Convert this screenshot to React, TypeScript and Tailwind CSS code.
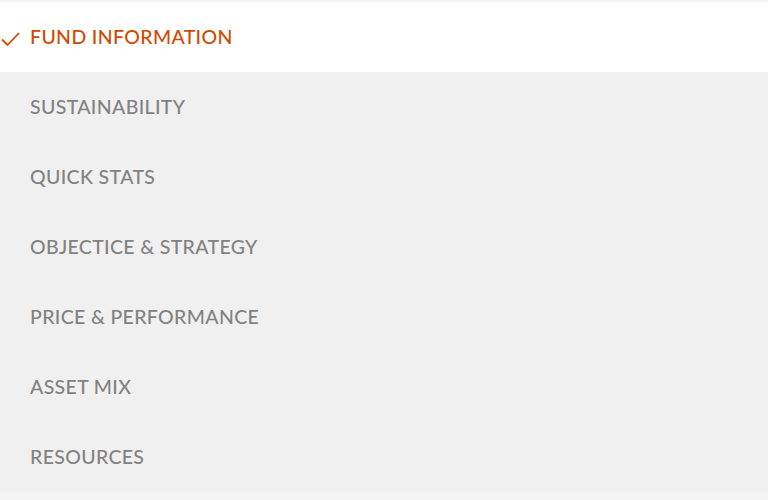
import React from "react";

const items = [
  "SUSTAINABILITY",
  "QUICK STATS",
  "OBJECTICE & STRATEGY",
  "PRICE & PERFORMANCE",
  "ASSET MIX",
  "RESOURCES",
];

export default function App() {
  return (
    <div className="w-[768px] h-[500px] bg-[#f4f4f4] pt-[2px]" style={{ fontFamily: "Lato, 'Open Sans', sans-serif" }}>
      <div className="h-[70px] bg-white flex items-center relative">
        <svg className="absolute left-[1px] top-[29px]" width="19" height="16" viewBox="0 0 19 16">
          <path d="M1 8.5 L6.5 14 L18 2" fill="none" stroke="#d04a02" strokeWidth="1.8" />
        </svg>
        <span className="pl-[30px] text-[19.5px] font-medium text-[#d04a02] tracking-[0.35px]">FUND INFORMATION</span>
      </div>
      {items.map((t) => (
        <div key={t} className="h-[70px] bg-[#f0f0f0] flex items-center">
          <span className="pl-[30px] text-[19.5px] font-medium text-[#828282] tracking-[0.35px]">{t}</span>
        </div>
      ))}
    </div>
  );
}
